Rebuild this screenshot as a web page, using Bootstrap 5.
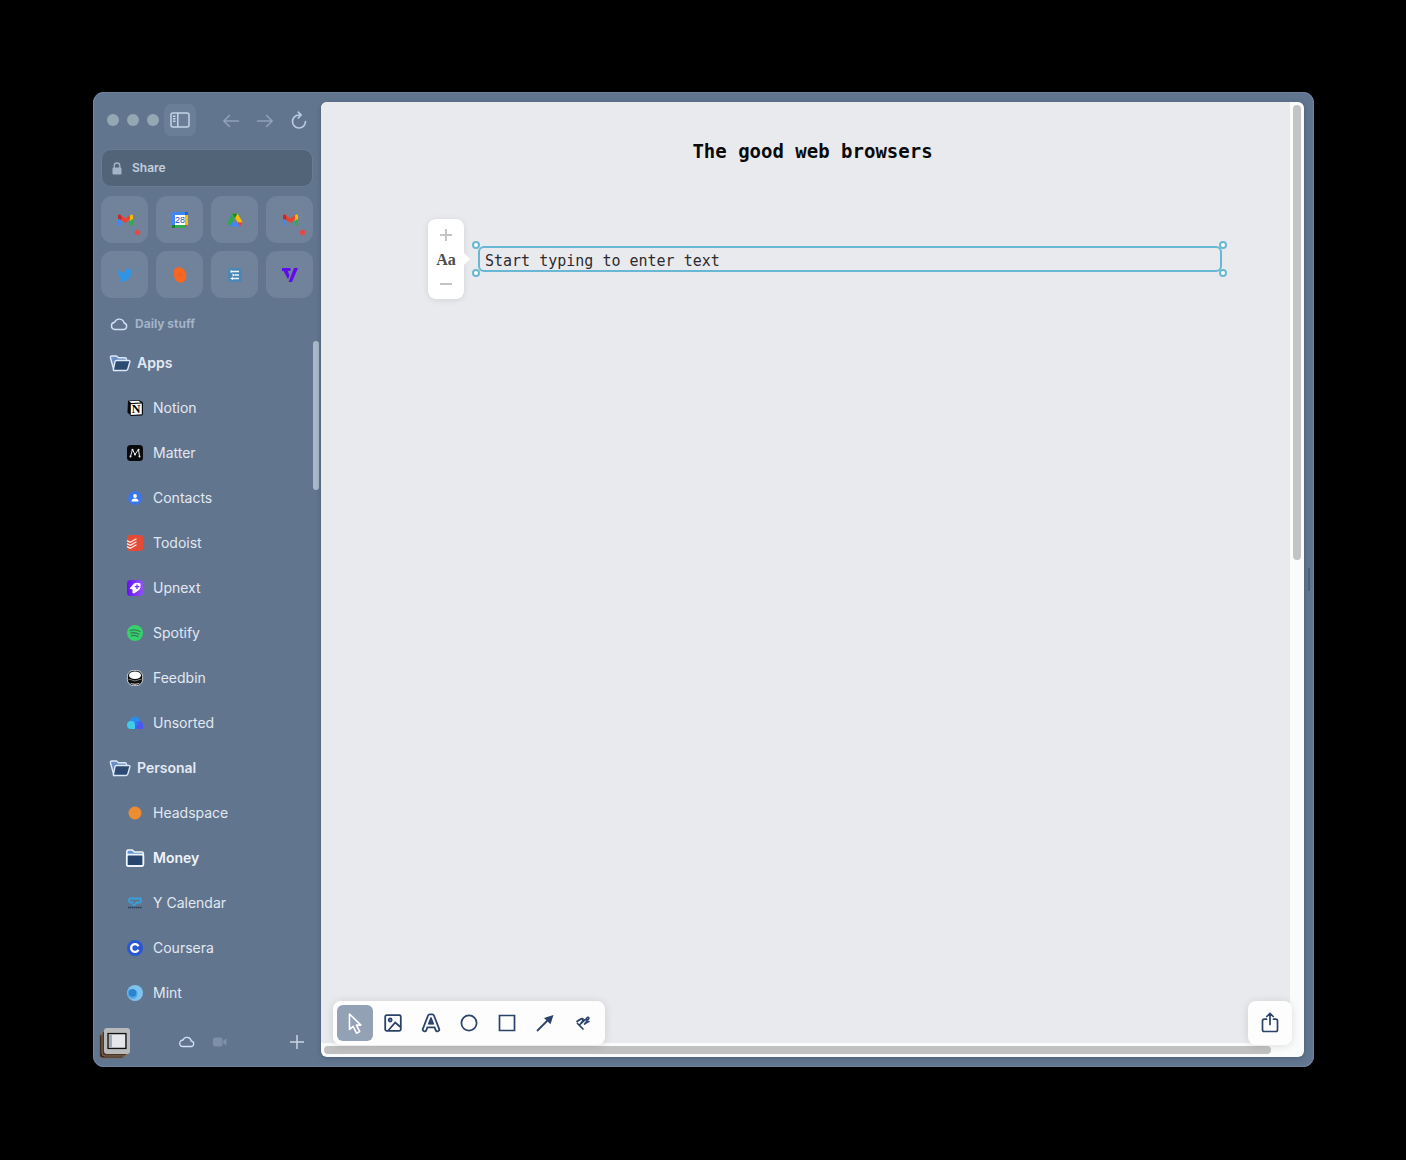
<!DOCTYPE html>
<html lang="en">
<head>
<meta charset="utf-8">
<meta name="viewport" content="width=device-width, initial-scale=1">
<title>The good web browsers</title>
<link href="https://cdn.jsdelivr.net/npm/bootstrap@5.3.0/dist/css/bootstrap.min.css" rel="stylesheet">
<style>
:root{--frame:#61758f;--tile:#70839b;--pale:#dbe5f2;--muted:#a3b3c8;--ink:#2b4368;--select:#68b7d4}
body{background:#000;font-family:Inter,"Liberation Sans",sans-serif;font-size:14px;line-height:20px}
svg{display:block;flex:none}
button{border:0;background:none;padding:0;color:inherit}
.desk{min-height:100vh;padding:92px 92px 93px 93px}
.browser{background:var(--frame);border-radius:11px;box-shadow:inset 0 0 0 1px #71839a;padding-right:10px}
.side{width:228px;padding:0 8px}
.chrome-row{padding:12px 0 13px}
.lights{padding-left:6px;margin-right:5px}
.dot{width:12px;height:12px;border-radius:50%;background:#94a8b4}
.toggle-btn{width:32px;height:32px;border-radius:7px;background:#6b7e97;color:#c3d3e7}
.nav-set{gap:6px}
.nav-btn{width:28px;height:32px;color:#91a3b9}
.address{height:38px;border-radius:10px;background:#526578;border:1px solid #6a7d90;padding:0 10px;gap:10px;color:var(--muted)}
.address input{border:0;background:none;outline:0;padding:0;width:100%;font-size:12px;font-weight:600;color:#c3cfdd}
.pins{display:grid;grid-template-columns:repeat(4,1fr);gap:8px;margin-top:9px}
.pin{height:47px;border-radius:11px;background:var(--tile)}
.space-name{height:32px;margin-top:10px;padding-left:9px;gap:7px;font-size:12px;font-weight:700;color:var(--muted)}
.tree{margin-right:-8px;padding-right:8px}
.tree a{height:45px;color:#e2e8f1;text-decoration:none}
.tree .group{padding-left:8px;gap:6px;font-weight:600;color:#e4eaf3}
.tree .leaf{padding-left:24px;gap:8px}
.tree .leaf.sub{font-weight:600;color:#eef3fa}
.side-thumb{right:2px;top:1px;width:6px;height:149px;border-radius:3px;background:#a9b8ca}
.side-foot{height:52px;padding-top:1px}
.spaces{gap:16px;padding-right:20px}
.sheet{margin:10px 0;border-radius:6px;overflow:hidden;background:#fafbfb;display:grid;grid-template:1fr 14px/1fr 14px;box-shadow:0 1px 4px #34455c80}
.canvas{background:#e9eaed;padding:36px 0 0 14px}
.canvas h1{font:700 19px/26px "DejaVu Sans Mono","Liberation Mono",monospace;color:#0a0a0a;margin:0 0 55px}
.editor{padding:0 68px 0 93px;gap:14px}
.sizer{width:36px;height:80px;border-radius:8px;background:#fff;box-shadow:0 1px 6px #0000001a;color:#c4c4c6;padding:8px 0}
.sizer::after{content:"";position:absolute;left:36px;top:34px;border:6px solid transparent;border-left:6px solid #fff;border-right:0}
.sizer-label{font:700 16px/20px "Liberation Serif",serif;color:#4b4b4e}
.text-field{height:26px}
.text-field input{width:100%;height:26px;border:2px solid var(--select);border-radius:6px;background:none;outline:0;padding:3px 5px 0;font:15px/19px "DejaVu Sans Mono","Liberation Mono",monospace;color:#2c2c30}
.knob{width:8px;height:8px;border-radius:50%;border:2px solid var(--select);background:#fff}
.knob.k1{left:-6px;top:-5px}.knob.k2{right:-5px;top:-5px}.knob.k3{left:-6px;bottom:-5px}.knob.k4{right:-5px;bottom:-5px}
.v-track,.h-track{padding:3px}
.v-thumb{width:8px;height:455px;border-radius:4px;background:#c4c4c4}
.h-thumb{width:calc(100% - 16px);height:8px;border-radius:4px;background:#c1c1c1}
.float-bar{bottom:12px;border-radius:8px;background:#fdfdfe;padding:4px;gap:2px;box-shadow:0 1px 10px #0000001f;color:var(--ink)}
.tools{left:12px}.share{right:12px}
.tool{width:36px;height:36px;border-radius:6px}
.tool.on{background:#92a1b4;color:#fff}
.grip{right:-6px;top:50%;width:2px;height:23px;margin-top:-12px;border-radius:1px;background:#4b5f7b}
</style>
<script src="https://cdn.jsdelivr.net/npm/bootstrap@5.3.0/dist/js/bootstrap.bundle.min.js" defer></script>
</head>
<body>
<div class="desk d-flex">
<div class="browser d-flex flex-grow-1">
<aside class="side d-flex flex-column flex-shrink-0">
  <div class="chrome-row d-flex align-items-center">
    <div class="lights d-flex gap-2"><span class="dot"></span><span class="dot"></span><span class="dot"></span></div>
    <button class="toggle-btn d-flex align-items-center justify-content-center" aria-label="Toggle sidebar"><svg width="20" height="16" viewBox="0 0 20 16" fill="none" stroke="currentColor" stroke-width="1.5"><rect x="1" y="1" width="18" height="14" rx="2"/><path d="M7.8 1v14M3 4.3h2.5M3 6.8h2.5M3 9.3h2.5"/></svg></button>
    <div class="nav-set d-flex flex-grow-1 justify-content-end">
      <button class="nav-btn d-flex align-items-center justify-content-center" aria-label="Back"><svg width="18" height="16" viewBox="0 0 18 16" fill="none" stroke="currentColor" stroke-width="1.5" stroke-linecap="round" stroke-linejoin="round"><path d="M16.500 9H2M7.500 3.500 1.800 9l5.700 5.500"/></svg></button>
      <button class="nav-btn d-flex align-items-center justify-content-center" aria-label="Forward"><svg width="18" height="16" viewBox="0 0 18 16" fill="none" stroke="currentColor" stroke-width="1.5" stroke-linecap="round" stroke-linejoin="round"><path d="M1.500 9H16M10.500 3.500l5.700 5.500-5.700 5.500"/></svg></button>
      <button class="nav-btn d-flex align-items-center justify-content-center" aria-label="Reload"><svg width="16" height="18" viewBox="0 0 16 18" fill="none" stroke="#b9cbe0" stroke-width="1.700" stroke-linecap="round" stroke-linejoin="round"><path d="M14.500 10.500A6.500 6.500 0 1 1 8 4h2M7.300 1.200 10.200 4 7.300 7"/></svg></button>
    </div>
  </div>
  <label class="address d-flex align-items-center"><svg width="10" height="13" viewBox="0 0 10 13"><path d="M2.200 6V3.800a2.800 2.800 0 0 1 5.600 0V6" fill="none" stroke="currentColor" stroke-width="1.300"/><rect x=".5" y="5.500" width="9" height="7" rx="1.300" fill="currentColor"/></svg><input type="text" value="Share" aria-label="Address"></label>
  <div class="pins">
    <a href="#" class="pin d-flex align-items-center justify-content-center" aria-label="Mail"><svg width="22" height="24" viewBox="0 0 22 24" overflow="visible"><path d="M4 9v8.500h3v-7z" fill="#4285f4"/><path d="M19 9v8.500h-3.500v-7z" fill="#34a853"/><path d="M15.500 8.200 17 6.500q2-.5 2 1.500v3l-3.500 2z" fill="#fbbc04"/><path d="M4 10.500V8q.2-2.500 3-1l4.500 3.500L16 7v4.500L11.500 15 7 12z" fill="#ea4335"/><path d="M4 11V8q.2-2.200 2.500-1.200L8 11.500z" fill="#b92d2b"/><circle cx="23.500" cy="24.500" r="2.800" fill="#e24a49"/></svg></a>
    <a href="#" class="pin d-flex align-items-center justify-content-center" aria-label="Calendar"><svg width="16" height="16" viewBox="0 0 16 16"><path d="M0 0h16v16H0z" fill="#4285f4"/><path d="M13 0h3v3h-3z" fill="#1967d2"/><path d="M13 3h3v10h-3z" fill="#fbbc04"/><path d="M0 13h13v3H0z" fill="#34a853"/><path d="M0 13h3v3H0z" fill="#188038"/><path d="M13 13h3l-3 3z" fill="#ea4335"/><path d="M16 13v3h-3z" fill="#70839b"/><path d="M3 3h10v10H3z" fill="#fff"/><text x="8" y="11" font-family="Liberation Sans" font-size="9" text-anchor="middle" fill="#1b4f9f">28</text></svg></a>
    <a href="#" class="pin d-flex align-items-center justify-content-center" aria-label="Drive"><svg width="16" height="16" viewBox="0 0 16 16"><path d="M5.500 1.500h5L5.200 10 2.800 14.500.3 10.500z" fill="#2da94f"/><path d="M5.500 1.500h5l5.200 9h-4.900z" fill="#fbbc04"/><path d="M8 6 5.500 1.500h5z" fill="#188038"/><path d="M5.200 10.500h5.500l2.500 4H2.800z" fill="#4285f4"/><path d="M10.700 10.500h5l-2.500 4z" fill="#ea4335"/></svg></a>
    <a href="#" class="pin d-flex align-items-center justify-content-center" aria-label="Second mail"><svg width="22" height="24" viewBox="0 0 22 24" overflow="visible"><path d="M4 9v8.500h3v-7z" fill="#4285f4"/><path d="M19 9v8.500h-3.500v-7z" fill="#34a853"/><path d="M15.500 8.200 17 6.500q2-.5 2 1.500v3l-3.500 2z" fill="#fbbc04"/><path d="M4 10.500V8q.2-2.500 3-1l4.500 3.500L16 7v4.500L11.500 15 7 12z" fill="#ea4335"/><path d="M4 11V8q.2-2.200 2.500-1.200L8 11.500z" fill="#b92d2b"/><circle cx="23.500" cy="24.500" r="2.800" fill="#e24a49"/></svg></a>
    <a href="#" class="pin d-flex align-items-center justify-content-center" aria-label="Twitter"><svg width="16" height="16" viewBox="0 0 16 16"><path d="M.8 2.600c1.800 2 4 3.200 6.800 3.400C7.300 3.600 8.700 1.800 11 1.800c1 0 1.800.4 2.400 1 .7-.1 1.300-.4 1.900-.7-.2.700-.7 1.300-1.300 1.700l1.600-.4c-.4.6-.9 1.200-1.500 1.600C14.200 10.200 10.800 14.500 5.500 14.500c-1.800 0-3.500-.5-4.900-1.400 1.700.2 3.300-.3 4.500-1.300-1.400 0-2.500-1-2.900-2.200h1.300C2 9.200 1 8 1 6.400l1.300.4C.9 5.800.4 4.200.8 2.600z" fill="#2e94e4"/></svg></a>
    <a href="#" class="pin d-flex align-items-center justify-content-center" aria-label="Orange app"><svg width="16" height="18" viewBox="0 0 16 18"><path d="M3.500 2Q7 .3 10.500 2.500 14 5 14.200 9.500q.2 4.500-3.400 6.800Q7.500 18 4 14.500 1.500 11 1.500 7 1.500 3.500 3.500 2z" fill="#f8661f"/><path d="M6.500 10.500q-1-3.500 1.600-3.500 2.400.8 1.600 4M7.800 9l2 1.500" fill="none" stroke="#dc6430" stroke-width="1"/></svg></a>
    <a href="#" class="pin d-flex align-items-center justify-content-center" aria-label="Notes"><svg width="16" height="16" viewBox="0 0 16 16"><rect x="1" y="1" width="14" height="14" rx="2" fill="#4b87b4"/><path d="M5 4.500h7M8 8h4M5 11.500h7" fill="none" stroke="#eef6fb" stroke-width="1.500"/><path d="M3.500 3 6.500 4.500 3.500 6zM5.500 6.500 8.500 8l-3 1.500zM6 10 3 11.500 6 13z" fill="#eef6fb"/></svg></a>
    <a href="#" class="pin d-flex align-items-center justify-content-center" aria-label="Purple app"><svg width="16" height="16" viewBox="0 0 16 16"><path d="M0 1h8.500v3H5.700l1.800 4.200L6 12.200 1.500 4H0zM12 1h4L10 15H6.600z" fill="#5f0bea"/></svg></a>
  </div>
  <div class="space-name d-flex align-items-center"><svg width="18" height="14" viewBox="0 0 18 14" fill="none" stroke="#d2e2f6" stroke-width="1.400"><path d="M4.500 12.500h9.200a3.300 3.300 0 0 0 .4-6.500A5 5 0 0 0 4.600 5.200 3.700 3.700 0 0 0 4.500 12.500z"/></svg><span>Daily stuff</span></div>
  <nav class="tree d-flex flex-column position-relative" aria-label="Daily stuff">
    <span class="side-thumb position-absolute"></span>
    <a href="#" class="group d-flex align-items-center"><svg width="22" height="18" viewBox="0 0 22 18" stroke="#dce9fa" stroke-width="1.400" stroke-linejoin="round"><path d="M5 16.500 1.500 4Q1 2 3 2h4.500l2 1.800H16q1.500 0 1.500 1.700v5z" fill="#6c8dc2"/><path d="M7.500 6.500H20q1.200 0 .9 1.200l-2 7q-.4 1.800-2 1.800H5.200q-1 0-.8-1L6 7.700q.3-1.200 1.500-1.200z" fill="#2c4a72"/></svg>Apps</a>
    <a href="#" class="leaf d-flex align-items-center"><svg width="20" height="16" viewBox="-2 0 20 16"><path d="M1 .8 12 0l4 2.500V14l-1 1.500L4 16 .5 12.500z" fill="#060708"/><path d="M2 1.300 11.500.8l2.300 1.600-9.400.5z" fill="#fff"/><path d="M3.800 4.300 14.800 3.600v10.700L3.800 15z" fill="#fff"/><text x="9.200" y="13" text-anchor="middle" font-family="Liberation Serif" font-weight="700" font-size="12" fill="#000">N</text></svg>Notion</a>
    <a href="#" class="leaf d-flex align-items-center"><svg width="20" height="16" viewBox="-2 0 20 16"><rect width="16" height="16" rx="3.500" fill="#090a0b"/><path d="M3.500 11.500 5.500 4.500 8 9.500l3.500-5 1 7" fill="none" stroke="#eee" stroke-width="1"/><g fill="#eee"><circle cx="3.500" cy="11.500" r="1"/><circle cx="5.500" cy="4.800" r="1"/><circle cx="8" cy="9.500" r="1"/><circle cx="11.500" cy="4.800" r="1"/><circle cx="12.500" cy="11.500" r="1"/></g></svg>Matter</a>
    <a href="#" class="leaf d-flex align-items-center"><svg width="20" height="16" viewBox="-2 0 20 16"><circle cx="8" cy="8" r="7" fill="#3a76ea"/><circle cx="8" cy="6" r="1.900" fill="#fff"/><path d="M4.500 11.500q0-3 3.500-3t3.500 3z" fill="#fff"/></svg>Contacts</a>
    <a href="#" class="leaf d-flex align-items-center"><svg width="20" height="16" viewBox="-2 0 20 16"><rect width="16" height="16" rx="3" fill="#e44b36"/><path d="M0 5.700 3.300 7.300 9.500 3.800M0 8.700l3.300 1.600 6.200-3.500M0 11.700l3.300 1.500 6.200-3.400" fill="none" stroke="#ffe9e3" stroke-width="1.300"/></svg>Todoist</a>
    <a href="#" class="leaf d-flex align-items-center"><svg width="20" height="16" viewBox="-2 0 20 16"><defs><linearGradient id="up" x2="1"><stop stop-color="#6411f2"/><stop offset="1" stop-color="#9450fb"/></linearGradient></defs><rect width="16" height="16" rx="3.500" fill="url(#up)"/><path d="M2.500 8.500 7 3.500Q10 2 13.300 3.200 14.500 7 12 10L8.500 12.500 7 13.500 5.500 13 5.500 9.500z" fill="#fff"/><path d="M10 4.500v4.500M7.800 6.700h4.500" stroke="#7a2cf6" stroke-width="1.300"/></svg>Upnext</a>
    <a href="#" class="leaf d-flex align-items-center"><svg width="20" height="16" viewBox="-2 0 20 16"><circle cx="8" cy="8" r="8" fill="#35d169"/><path d="M3.300 5.500q5-1.500 9.800 1M3.800 8.200q4.500-1.200 8.200 1M4.300 10.800q3.500-1 6.700.8" fill="none" stroke="#397a61" stroke-width="1.300" stroke-linecap="round"/></svg>Spotify</a>
    <a href="#" class="leaf d-flex align-items-center"><svg width="20" height="16" viewBox="-2 0 20 16"><rect x=".4" y=".4" width="15.200" height="15.200" rx="6" fill="#0c0c0d" stroke="#e9eceb" stroke-width=".8"/><ellipse cx="8" cy="5.300" rx="6" ry="3.800" fill="#fff"/><path d="M1.500 9.300q3 .2 4.500 1.200 2 .8 4 0 1.500-1 4.500-1.200" fill="none" stroke="#aaa" stroke-width=".7"/><path d="M3 12.800q5 1.800 10 0-1.500 2-5 2t-5-2z" fill="#fff"/></svg>Feedbin</a>
    <a href="#" class="leaf d-flex align-items-center"><svg width="20" height="16" viewBox="-2 0 20 16"><circle cx="8" cy="7" r="5.500" fill="#2d8ce8"/><path d="M4 6q4 0 4 4.200V14H4a4 4 0 0 1 0-8z" fill="#40cbe8"/><path d="M8 14V10.200Q8 6 12 6t4 4.200V14z" fill="#4c58ec"/><path d="M8 13V9.500Q9 6 13 6z" fill="#3673f2"/></svg>Unsorted</a>
    <a href="#" class="group d-flex align-items-center"><svg width="22" height="18" viewBox="0 0 22 18" stroke="#dce9fa" stroke-width="1.400" stroke-linejoin="round"><path d="M5 16.500 1.500 4Q1 2 3 2h4.500l2 1.800H16q1.500 0 1.500 1.700v5z" fill="#6c8dc2"/><path d="M7.500 6.500H20q1.200 0 .9 1.200l-2 7q-.4 1.800-2 1.800H5.200q-1 0-.8-1L6 7.700q.3-1.200 1.500-1.200z" fill="#2c4a72"/></svg>Personal</a>
    <a href="#" class="leaf d-flex align-items-center"><svg width="20" height="16" viewBox="-2 0 20 16"><circle cx="8" cy="8" r="6.500" fill="#ee8c31"/></svg>Headspace</a>
    <a href="#" class="leaf sub d-flex align-items-center"><svg width="20" height="18" viewBox="0 0 20 18"><path d="M1.800 15V2.500Q1.800 1 3.300 1h4l2 2h7.500q1.500 0 1.500 1.500V15q0 2-2 2H3.800q-2 0-2-2z" fill="#6795cf" stroke="#eef4fc" stroke-width="1.600"/><rect x="1.800" y="5.600" width="16.500" height="11.400" rx="1.500" fill="#27466e" stroke="#eef4fc" stroke-width="1.800"/></svg>Money</a>
    <a href="#" class="leaf d-flex align-items-center"><svg width="20" height="16" viewBox="-2 0 20 16" fill="none"><path d="M6.500 7.500H3Q2 7.500 2 6.300V4.700Q2 3.500 3 3.500h10q1 0 1 1.200v1.600q0 1.200-1.200 1.200h-3L7.500 10H5.500" stroke="#37a1db" stroke-width="1.800"/><path d="M1 12.500h14" stroke="#263f5b" stroke-width="1.600" stroke-dasharray="1.500 .5"/></svg>Y Calendar</a>
    <a href="#" class="leaf d-flex align-items-center"><svg width="20" height="16" viewBox="-2 0 20 16"><circle cx="8" cy="8" r="8" fill="#2b57d3"/><path d="M11.500 6.200a3.900 3.900 0 1 0 0 3.600" fill="none" stroke="#fff" stroke-width="2.300"/></svg>Coursera</a>
    <a href="#" class="leaf d-flex align-items-center"><svg width="20" height="16" viewBox="-2 0 20 16"><circle cx="8" cy="8" r="8" fill="#7dc3ee"/><path d="M1 5q5-3 9 1 2 5-3 8-5 0-6.500-4z" fill="#57a8e2"/><circle cx="5.500" cy="8" r="3.800" fill="#2b83cf"/></svg>Mint</a>
  </nav>
  <div class="side-foot d-flex align-items-center">
    <button aria-label="Library"><svg width="36" height="34" viewBox="0 0 36 34" overflow="visible"><rect x="-1.500" y="9" width="25" height="24" rx="3" fill="#3a2a20" stroke="#7b6855"/><rect x="1" y="6" width="25" height="25" rx="3" fill="#4a3626" stroke="#88715a"/><rect x="3" y="3" width="26" height="26" rx="3" fill="#b8babc"/><rect x="6" y="7.500" width="20" height="17" fill="#fff"/><rect x="7" y="8.500" width="18" height="15" fill="#e4e6eb" stroke="#111" stroke-width="1.500"/><path d="M8 9.500h3v13H8z" fill="#a2abb8"/></svg></button>
    <div class="spaces d-flex flex-grow-1 justify-content-center align-items-center">
      <button aria-label="Daily stuff space"><svg width="18" height="14" viewBox="0 0 18 14" fill="none" stroke="#d2e2f6" stroke-width="1.300"><path d="M5 11.500h7.800a2.700 2.700 0 0 0 .4-5.400A4.300 4.300 0 0 0 5 5 3.200 3.200 0 0 0 5 11.500z"/></svg></button>
      <button aria-label="Meetings space"><svg width="16" height="12" viewBox="0 0 16 12" fill="#7e90a7"><rect x="1" y="1.500" width="9.500" height="9" rx="2"/><path d="m11 5 3.500-2.700v7.400L11 7z"/></svg></button>
    </div>
    <button class="pe-2" aria-label="New tab"><svg width="16" height="16" viewBox="0 0 16 16" stroke="#c9d5e4" stroke-width="1.500"><path d="M8 1v14M1 8h14"/></svg></button>
  </div>
</aside>
<div class="flex-grow-1 d-flex position-relative">
<main class="sheet flex-grow-1 position-relative">
  <div class="canvas">
    <h1 class="text-center">The good web browsers</h1>
    <div class="editor d-flex align-items-center">
      <div class="sizer d-flex flex-column align-items-center justify-content-between position-relative flex-shrink-0">
        <button aria-label="Larger text"><svg width="14" height="16" viewBox="0 0 14 16" stroke="currentColor" stroke-width="2"><path d="M7 2v12M1 8h12"/></svg></button>
        <span class="sizer-label">Aa</span>
        <button aria-label="Smaller text"><svg width="14" height="14" viewBox="0 0 14 14" stroke="currentColor" stroke-width="2"><path d="M1 7h12"/></svg></button>
      </div>
      <div class="text-field position-relative flex-grow-1">
        <input type="text" value="Start typing to enter text" aria-label="Text block">
        <span class="knob k1 position-absolute"></span><span class="knob k2 position-absolute"></span><span class="knob k3 position-absolute"></span><span class="knob k4 position-absolute"></span>
      </div>
    </div>
  </div>
  <div class="v-track"><div class="v-thumb"></div></div>
  <div class="h-track"><div class="h-thumb"></div></div>
  <div></div>
  <div class="float-bar tools d-flex position-absolute" role="toolbar" aria-label="Drawing tools">
    <button class="tool on d-flex align-items-center justify-content-center" aria-label="Select"><svg width="20" height="24" viewBox="0 0 20 24" fill="none" stroke="currentColor" stroke-width="1.600" stroke-linejoin="round"><path d="M4.500 3v15.500l3.600-3.200 3.400 6.900 3.200-1.600-3.300-6.500h4.500z"/></svg></button>
    <button class="tool d-flex align-items-center justify-content-center" aria-label="Image"><svg width="18" height="18" viewBox="0 0 18 18" fill="none" stroke="currentColor" stroke-width="1.800"><rect x="1.200" y="1.200" width="15.600" height="15.600" rx="1.500"/><circle cx="6.200" cy="6" r="1.500"/><path d="m4.300 16.500 6.900-8 5.600 4.700"/></svg></button>
    <button class="tool d-flex align-items-center justify-content-center" aria-label="Text"><svg width="20" height="22" viewBox="0 0 20 22" fill="none" stroke-linecap="round" stroke-linejoin="round"><path d="M3.600 17.500 8.800 4.200h2.400l5.200 13.300M6 13.500h8" stroke="currentColor" stroke-width="5.500"/><path d="M3.600 17.500 8.800 4.200h2.400l5.200 13.300M6 13.500h8" stroke="#fdfdfe" stroke-width="2"/><path d="m10 8 2 4.300H8z" fill="currentColor"/></svg></button>
    <button class="tool d-flex align-items-center justify-content-center" aria-label="Ellipse"><svg width="18" height="18" viewBox="0 0 18 18" fill="none" stroke="currentColor" stroke-width="1.700"><circle cx="9" cy="9" r="7.600"/></svg></button>
    <button class="tool d-flex align-items-center justify-content-center" aria-label="Rectangle"><svg width="18" height="18" viewBox="0 0 18 18" fill="none" stroke="currentColor" stroke-width="1.700"><path d="M1.500 1.500h15v15h-15z"/></svg></button>
    <button class="tool d-flex align-items-center justify-content-center" aria-label="Arrow"><svg width="18" height="18" viewBox="0 0 18 18"><path d="M1 17 12 6" stroke="currentColor" stroke-width="1.800"/><path d="M17.500 1 14.500 10.200 8 4z" fill="currentColor"/></svg></button>
    <button class="tool d-flex align-items-center justify-content-center" aria-label="Scribble"><svg width="18" height="18" viewBox="0 0 18 18" fill="none" stroke="currentColor" stroke-width="1.700" stroke-linecap="round" stroke-linejoin="round"><path d="M3 7.500Q8.500 3.500 9 5T6 10.500Q12 4 12.800 5.500T10.500 10Q13.500 8 14.800 7.500M3.500 9.500 9 15M12.500 4.500q1.500-2 2.200-.8t-1.500 2.300"/></svg></button>
  </div>
  <div class="float-bar share d-flex position-absolute">
    <button class="tool d-flex align-items-center justify-content-center" aria-label="Share"><svg width="18" height="22" viewBox="0 0 18 22" fill="none" stroke="currentColor" stroke-width="1.700" stroke-linecap="round" stroke-linejoin="round"><path d="M5.500 7.200H3.200q-1.700 0-1.700 1.700v8.900q0 1.700 1.700 1.700h11.600q1.700 0 1.700-1.700V8.900q0-1.700-1.700-1.700h-2.300M9 12.500V1.500M5.800 4.500 9 1.300 12.200 4.500"/></svg></button>
  </div>
</main>
<span class="grip position-absolute"></span>
</div>
</div>
</div>
</body>
</html>
